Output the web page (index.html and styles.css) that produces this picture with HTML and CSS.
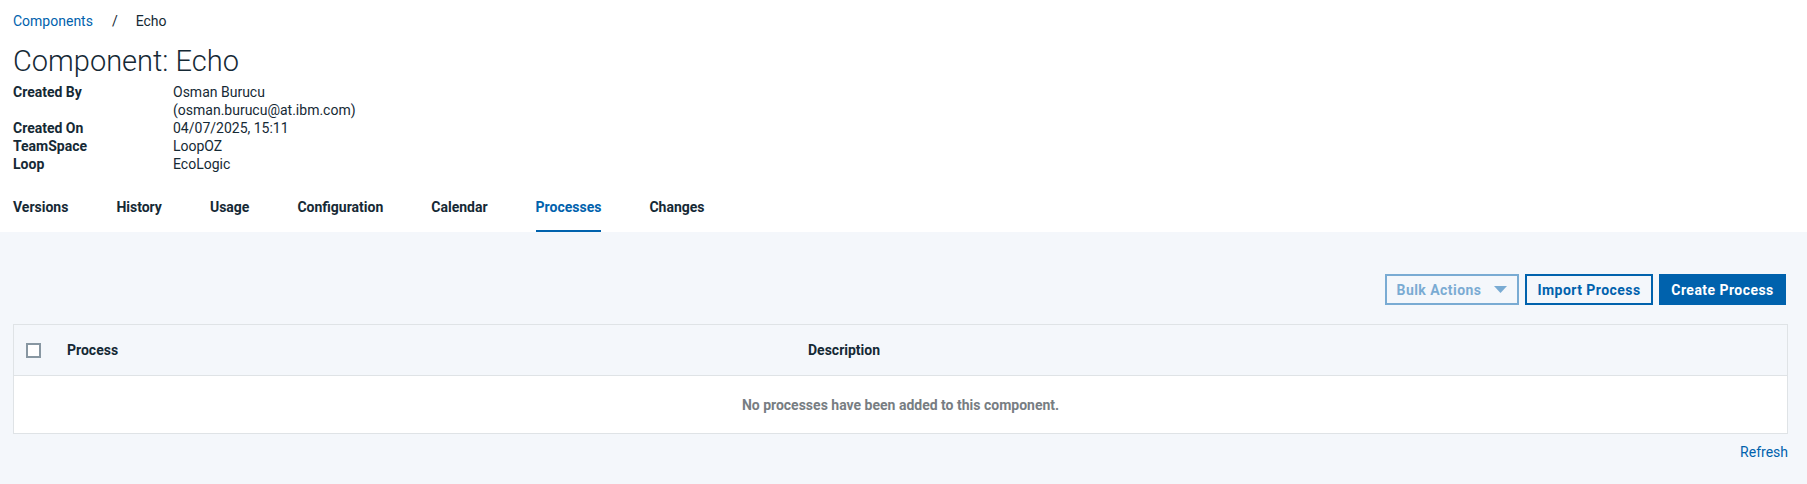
FILE: index.html
```html
<!DOCTYPE html>
<html lang="en">
<head>
<meta charset="utf-8">
<title>Component: Echo</title>
<link rel="stylesheet" href="styles.css">
</head>
<body>
<header class="page-head">
  <nav class="crumbs">
    <a class="crumb-link" href="#">Components</a>
    <span class="crumb-sep">/</span>
    <span class="crumb-current">Echo</span>
  </nav>
  <h1 class="title">Component: Echo</h1>
  <dl class="meta">
    <dt>Created By</dt>
    <dd>Osman Burucu<br>(osman.burucu@at.ibm.com)</dd>
    <dt>Created On</dt>
    <dd>04/07/2025, 15:11</dd>
    <dt>TeamSpace</dt>
    <dd>LoopOZ</dd>
    <dt>Loop</dt>
    <dd>EcoLogic</dd>
  </dl>
  <nav class="tabs">
    <a class="tab" href="#">Versions</a>
    <a class="tab" href="#">History</a>
    <a class="tab" href="#">Usage</a>
    <a class="tab" href="#">Configuration</a>
    <a class="tab" href="#">Calendar</a>
    <a class="tab tab-active" href="#">Processes</a>
    <a class="tab" href="#">Changes</a>
  </nav>
</header>
<main class="panel">
  <div class="toolbar">
    <button class="btn btn-ghost btn-disabled btn-bulk" type="button">Bulk Actions
      <svg class="caret" width="13" height="7" viewBox="0 0 13 7"><path d="M0 0h13L6.5 7z" fill="currentColor"/></svg>
    </button>
    <button class="btn btn-ghost btn-import" type="button">Import Process</button>
    <button class="btn btn-primary btn-create" type="button">Create Process</button>
  </div>
  <div class="table">
    <div class="thead">
      <div class="cell cell-check"><span class="checkbox"></span></div>
      <div class="cell">Process</div>
      <div class="cell">Description</div>
    </div>
    <div class="tbody">
      <div class="empty">No processes have been added to this component.</div>
    </div>
  </div>
  <div class="footer">
    <a class="refresh" href="#">Refresh</a>
  </div>
</main>
</body>
</html>
```
FILE: styles.css
```css
* { box-sizing: border-box; }
html, body { height: 100%; }
body {
  margin: 0;
  font-family: Roboto, "Liberation Sans", Arial, sans-serif;
  font-size: 14px;
  line-height: 18px;
  color: #152935;
  background: #ffffff;
  display: flex;
  flex-direction: column;
}
a { text-decoration: none; }

.page-head {
  padding: 12px 13px 0;
}
.crumbs {
  display: flex;
  align-items: center;
  font-size: 14px;
  line-height: 18px;
}
.crumb-link { color: #0062ad; }
.crumb-sep { margin: 0 18px 0 19px; color: #152935; }
.crumb-current { color: #152935; }

.title {
  margin: 13px 0 0;
  font-size: 29px;
  line-height: 36px;
  font-weight: 300;
  color: #152935;
}

.meta {
  margin: 4px 0 0;
  display: grid;
  grid-template-columns: 160px 1fr;
  font-size: 14px;
  line-height: 18px;
}
.meta dt { font-weight: 700; }
.meta dd { margin: 0; }

.tabs {
  display: flex;
  gap: 48px;
  margin-top: 25px;
}
.tab {
  color: #152935;
  font-weight: 700;
  font-size: 14px;
  line-height: 18px;
  padding-bottom: 14px;
  border-bottom: 2px solid transparent;
}
.tab-active {
  color: #0062ad;
  border-bottom-color: #0062ad;
}

.panel {
  flex: 1;
  background: #f4f7fb;
  padding: 42px 19px 0 13px;
}
.toolbar {
  display: flex;
  justify-content: flex-end;
  gap: 6px;
  padding-right: 2px;
}
.btn {
  height: 31px;
  padding: 0;
  font-family: inherit;
  font-size: 14px;
  line-height: 16px;
  font-weight: 700;
  letter-spacing: 0.45px;
  border: 2px solid #0062ad;
  display: inline-flex;
  align-items: center;
  justify-content: center;
  cursor: pointer;
}
.btn-bulk { width: 134px; }
.btn-import { width: 128px; }
.btn-create { width: 127px; }
.btn-ghost {
  background: transparent;
  color: #0062ad;
}
.btn-primary {
  background: #0062ad;
  color: #ffffff;
}
.btn-disabled {
  opacity: 0.5;
}
.caret { margin-left: 13px; }

.table {
  margin-top: 19px;
  border: 1px solid #dfe3e6;
  background: #ffffff;
}
.thead {
  display: grid;
  grid-template-columns: 53px 741px 1fr;
  align-items: center;
  height: 51px;
  background: #f4f7fb;
  border-bottom: 1px solid #dfe3e6;
  font-weight: 700;
}
.cell-check {
  padding-left: 12px;
  display: flex;
  align-items: center;
}
.checkbox {
  width: 15px;
  height: 15px;
  border: 2px solid #8897a2;
  background: #ffffff;
}
.tbody {
  height: 57px;
  display: flex;
  align-items: center;
  justify-content: center;
}
.empty {
  color: #777d82;
  font-weight: 700;
}
.footer {
  display: flex;
  justify-content: flex-end;
  margin-top: 9px;
}
.refresh { color: #0062ad; }
```
